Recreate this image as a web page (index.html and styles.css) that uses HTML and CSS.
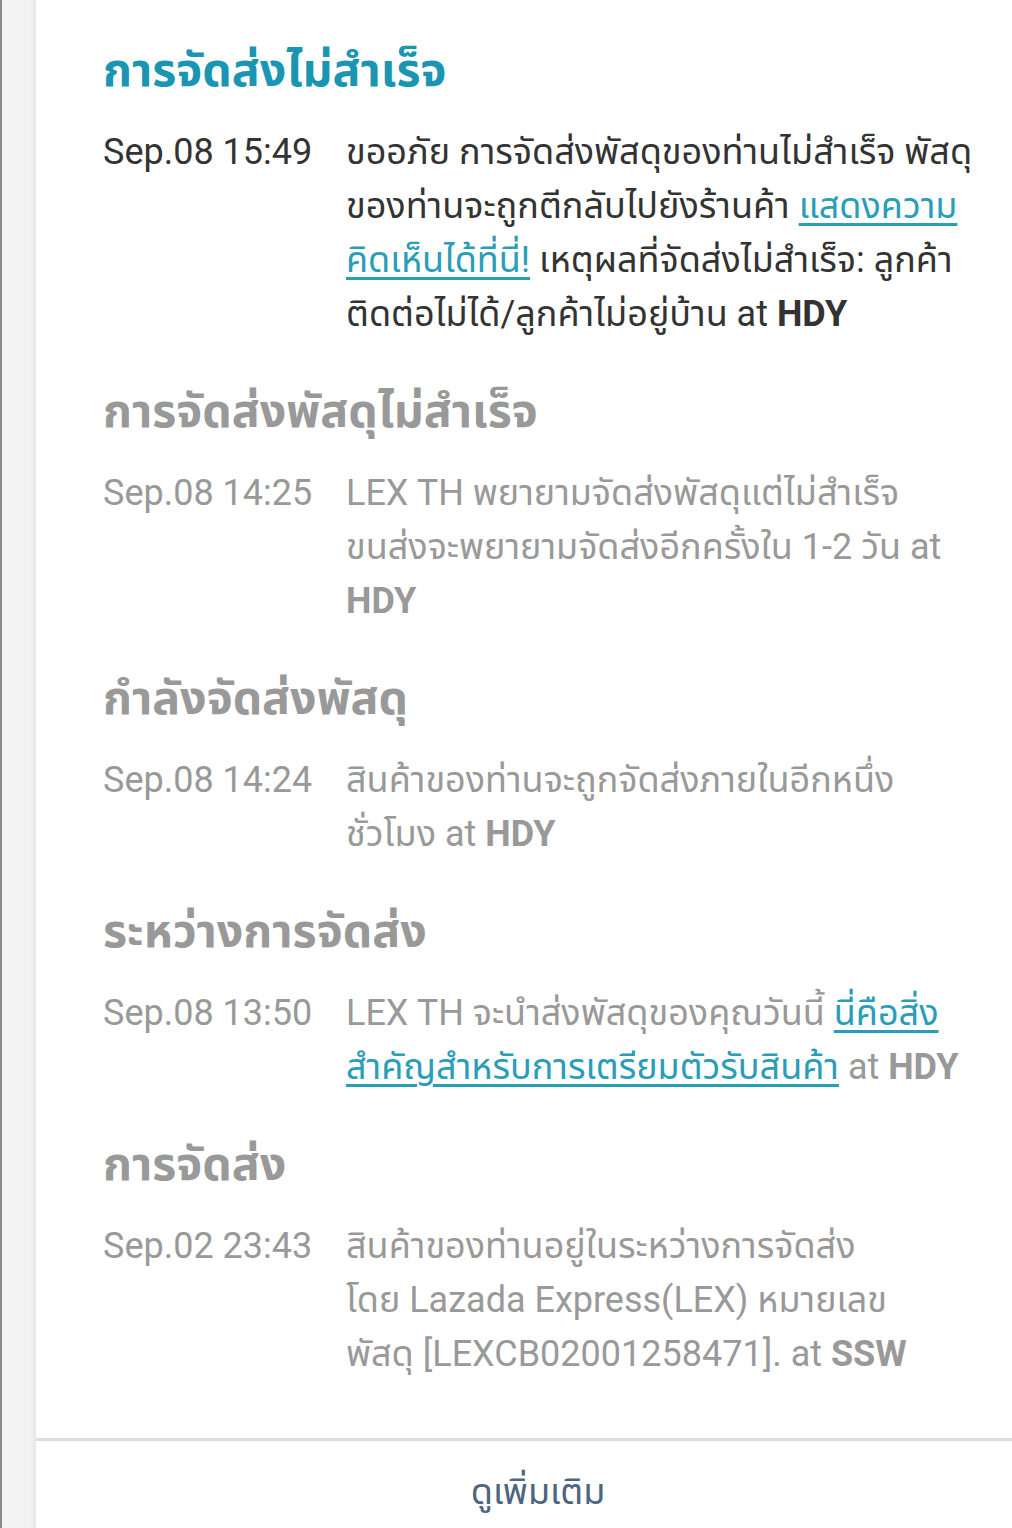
FILE: index.html
```html
<!DOCTYPE html>
<html lang="th">
<head>
<meta charset="utf-8">
<title>การจัดส่ง</title>
<link rel="stylesheet" href="styles.css">
</head>
<body>
<div class="page">
  <aside class="rail"></aside>
  <main class="panel">
    <div class="timeline">
      <section class="event current">
        <h2 class="event-title">การจัดส่งไม่สำเร็จ</h2>
        <div class="event-row">
          <div class="event-time">Sep.08 15:49</div>
          <div class="event-desc">ขออภัย การจัดส่งพัสดุของท่านไม่สำเร็จ พัสดุ<br>ของท่านจะถูกตีกลับไปยังร้านค้า <a href="#">แสดงความ<br>คิดเห็นได้ที่นี่!</a> เหตุผลที่จัดส่งไม่สำเร็จ: ลูกค้า<br>ติดต่อไม่ได้/ลูกค้าไม่อยู่บ้าน at <b>HDY</b></div>
        </div>
      </section>
      <section class="event">
        <h2 class="event-title">การจัดส่งพัสดุไม่สำเร็จ</h2>
        <div class="event-row">
          <div class="event-time">Sep.08 14:25</div>
          <div class="event-desc">LEX TH พยายามจัดส่งพัสดุแต่ไม่สำเร็จ<br>ขนส่งจะพยายามจัดส่งอีกครั้งใน 1-2 วัน at<br><b>HDY</b></div>
        </div>
      </section>
      <section class="event">
        <h2 class="event-title">กำลังจัดส่งพัสดุ</h2>
        <div class="event-row">
          <div class="event-time">Sep.08 14:24</div>
          <div class="event-desc">สินค้าของท่านจะถูกจัดส่งภายในอีกหนึ่ง<br>ชั่วโมง at <b>HDY</b></div>
        </div>
      </section>
      <section class="event">
        <h2 class="event-title">ระหว่างการจัดส่ง</h2>
        <div class="event-row">
          <div class="event-time">Sep.08 13:50</div>
          <div class="event-desc">LEX TH จะนำส่งพัสดุของคุณวันนี้ <a href="#">นี่คือสิ่ง<br>สำคัญสำหรับการเตรียมตัวรับสินค้า</a> at <b>HDY</b></div>
        </div>
      </section>
      <section class="event">
        <h2 class="event-title">การจัดส่ง</h2>
        <div class="event-row">
          <div class="event-time">Sep.02 23:43</div>
          <div class="event-desc">สินค้าของท่านอยู่ในระหว่างการจัดส่ง<br>โดย Lazada Express(LEX) หมายเลข<br>พัสดุ [LEXCB02001258471]. at <b>SSW</b></div>
        </div>
      </section>
    </div>
    <div class="more">
      <a class="more-link" href="#">ดูเพิ่มเติม</a>
    </div>
  </main>
</div>
</body>
</html>
```
FILE: styles.css
```css
html, body {
  margin: 0;
  padding: 0;
  background: #ffffff;
}
body {
  font-family: Roboto, "Noto Sans", "Noto Sans Thai", "Noto Sans Thai UI", sans-serif;
  color: #333333;
}
.page {
  display: flex;
  min-height: 1528px;
}
.rail {
  width: 34px;
  flex: 0 0 34px;
  border-left: 2px solid #8a8a8a;
  background: linear-gradient(to right, #f3f3f3 0, #f3f3f3 28px, #e6e6e6 34px);
}
.panel {
  flex: 1;
  background: #ffffff;
  display: flex;
  flex-direction: column;
}
.timeline {
  padding: 42px 0 0 67px;
  height: 1438px;
  box-sizing: border-box;
}
.event {
  margin-bottom: 42px;
}
.event-title {
  margin: 0 0 27px;
  font-size: 46.5px;
  line-height: 56px;
  font-weight: 700;
  color: #999999;
}
.current .event-title {
  color: #1a96b2;
}
.event-row {
  display: flex;
  font-size: 36px;
  line-height: 54px;
  color: #999999;
}
.current .event-row {
  color: #333333;
}
.event-time {
  flex: 0 0 243px;
}
.event-desc {
  flex: 1;
}
.event-desc a {
  color: #2a9db8;
  text-decoration: underline;
  text-underline-offset: 5px;
}
.event-desc b {
  font-weight: 700;
}
.more {
  border-top: 3px solid #dddddd;
  display: flex;
  justify-content: center;
  padding: 24px 0 0 28px;
}
.more-link {
  color: #4c6580;
  font-size: 36px;
  line-height: 54px;
  text-decoration: none;
}
```
